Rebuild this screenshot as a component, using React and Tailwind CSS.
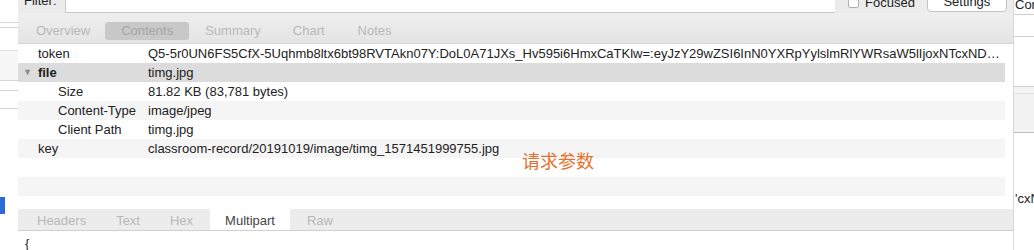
import React from 'react';

const rows = [
  { key: 'token', value: 'Q5-5r0UN6FS5CfX-5Uqhmb8ltx6bt98RVTAkn07Y:DoL0A71JXs_Hv595i6HmxCaTKlw=:eyJzY29wZSI6InN0YXRpYylslmRlYWRsaW5lIjoxNTcxNDU1NjAsInVwaG9zdHMiOlsiaHR0cA' },
  { key: 'file', value: 'timg.jpg', parent: true },
  { key: 'Size', value: '81.82 KB (83,781 bytes)', child: true },
  { key: 'Content-Type', value: 'image/jpeg', child: true },
  { key: 'Client Path', value: 'timg.jpg', child: true },
  { key: 'key', value: 'classroom-record/20191019/image/timg_1571451999755.jpg' },
  { key: '', value: '' },
  { key: '', value: '' },
];

// tab label + left gap, taken from the screenshot
const topTabs = [
  { label: 'Overview', gap: 'ml-[18px]' },
  { label: 'Contents', gap: 'ml-[15px]', active: true },
  { label: 'Summary', gap: 'ml-[16px]' },
  { label: 'Chart', gap: 'ml-[32px]' },
  { label: 'Notes', gap: 'ml-[33px]' },
];
const bottomTabs = ['Headers', 'Text', 'Hex', 'Multipart', 'Raw'];

const App = () => {
  return (
    <div className="w-[1034px] h-[250px] overflow-hidden bg-white flex text-[13px] text-[#222] font-['Liberation_Sans','Noto_Sans_CJK_SC',sans-serif]">
      {/* Left pane edge */}
      <div className="w-[18px] shrink-0 flex flex-col bg-white">
        <div className="h-[22px]" />
        <div className="h-[5px] border-t border-[#d4d4d4]" />
        <div className="h-[23px] border-t border-[#d4d4d4]" />
        <div className="h-[30px] border-t border-[#e0e0e0] bg-[#f7f7f7]" />
        <div className="h-[10px] border-t border-[#d4d4d4]" />
        <div className="h-[18px] border-t border-[#d4d4d4]" />
        <div className="h-[89px] border-t border-[#d4d4d4]" />
        <div className="h-[17px] w-[5px] bg-[#2c6bd6]" />
      </div>

      {/* Main pane */}
      <div className="w-[995px] shrink-0 flex flex-col">
        {/* Filter row */}
        <div className="h-[24px] -mt-[11px] flex items-center bg-[#ececec]">
          <span className="pl-[6px] w-[47px]">Filter:</span>
          <div className="w-[770px] h-full bg-white border-b border-l border-[#c8c8c8]" />
          <div className="ml-[13px] w-[11px] h-[11px] mt-[4px] bg-white border border-[#b0b0b0] rounded-[2px]" />
          <span className="ml-[6px] mt-[4px]">Focused</span>
          <div className="ml-[12px] mt-[2px] w-[80px] h-[20px] bg-white border border-[#c4c4c4] rounded-[4px] flex items-center justify-center">
            Settings
          </div>
        </div>

        {/* Top tabs */}
        <div className="h-[33px] flex items-center bg-gradient-to-b from-[#efefef] to-[#e4e4e4] border-b border-[#d6d6d6]">
          {topTabs.map((tab) => (
            <div
              key={tab.label}
              className={`h-[18px] mt-[6px] flex items-center justify-center rounded-[3px] ${tab.gap} ${
                tab.active ? 'w-[84px] bg-[#c8c8c8] text-[#a6a6a6]' : 'text-[#b9b9b9]'
              }`}
            >
              {tab.label}
            </div>
          ))}
        </div>

        {/* Table rows */}
        <div className="flex flex-col mr-[8px] relative">
          {rows.map((row, i) => (
            <div
              key={i}
              className={`h-[19px] flex items-center shrink-0 ${
                row.parent ? 'bg-[#dcdcdc]' : i % 2 === 1 ? 'bg-[#f5f5f5]' : 'bg-white'
              }`}
            >
              <div className={`w-[130px] shrink-0 flex items-center ${row.child ? 'pl-[40px]' : 'pl-[20px]'}`}>
                {row.parent && (
                  <span className="-ml-[15px] mr-[6px] text-[9px] text-[#8a8a8a]">▼</span>
                )}
                <span className={row.parent ? 'font-bold' : ''}>{row.key}</span>
              </div>
              <div className="flex-1 min-w-0 truncate">{row.value}</div>
            </div>
          ))}
          <div className="h-[13px] bg-white" />
          {/* annotation drawn over the table */}
          <span className="absolute left-[504px] top-[109px] text-[18px] leading-none text-[#e2732f]">请求参数</span>
        </div>

        {/* Bottom tabs */}
        <div className="h-[22px] flex items-stretch pl-[6px] bg-[#ececec] border-b border-[#d0d0d0]">
          {bottomTabs.map((tab) => (
            <div
              key={tab}
              className={`flex items-center pt-[2px] px-[13px] mr-[4px] ${
                tab === 'Multipart' ? 'bg-white text-[#444] px-[15px]' : 'text-[#b8b8b8]'
              }`}
            >
              {tab}
            </div>
          ))}
        </div>
        <div className="pl-[7px] pt-[6px] leading-none">{'{'}</div>
      </div>

      {/* Right pane edge */}
      <div className="flex-1 flex flex-col border-l border-[#d8d8d8]">
        <div className="h-[18px] -mt-[4px] pl-[1px] flex items-center">Cor</div>
        <div className="h-[22px] border-t border-[#cfcfcf]" />
        <div className="h-[50px] border-t border-[#cfcfcf]" />
        <div className="h-[7px] border-t border-[#cfcfcf] bg-[#f4f4f4]" />
        <div className="h-[40px] border-t border-[#e0e0e0] bg-[#f2f2f2] border-b border-b-[#bdbdbd]" />
        <div className="h-[56px]" />
        <div className="pl-[1px]">'cxN</div>
      </div>
    </div>
  );
};

export default App;
